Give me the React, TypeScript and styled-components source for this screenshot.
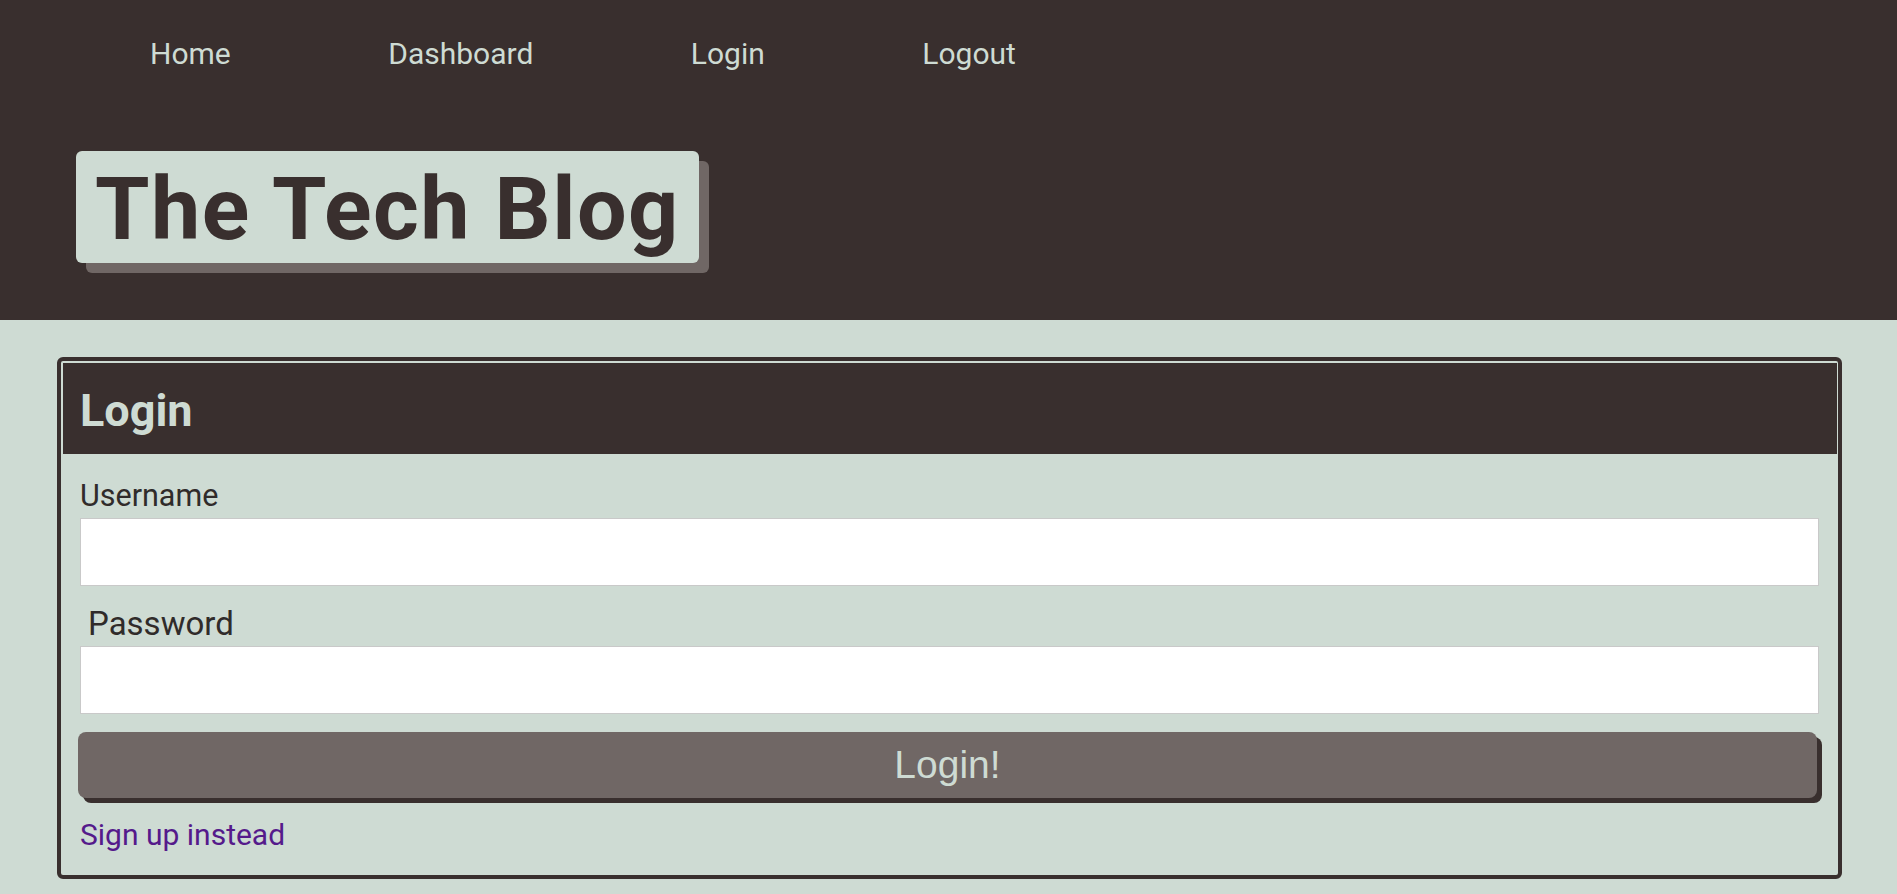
import React from 'react'
import styled, { createGlobalStyle } from 'styled-components'

const dark = '#392f2e'
const light = '#cedbd3'
const grey = '#706765'

const GlobalStyle = createGlobalStyle`
  body {
    margin: 0;
    background: ${light};
    font-family: Roboto, 'Noto Sans', sans-serif;
  }
`

const Header = styled.header`
  background: ${dark};
  height: 320px;
  box-sizing: border-box;
  padding-top: 36px;
`

const Nav = styled.nav`
  display: flex;
  gap: 157.5px;
  padding-left: 150px;
`

const NavLink = styled.a`
  font-size: 30px;
  line-height: 35px;
  color: ${light};
  text-decoration: none;
`

const TitleBox = styled.h1`
  display: inline-block;
  margin: 80px 0 0 76px;
  padding: 4px 19px 0;
  height: 112px;
  box-sizing: border-box;
  background: ${light};
  color: ${dark};
  border-radius: 6px;
  box-shadow: 10px 10px 0 ${grey};
  font-size: 88px;
  font-weight: 700;
  line-height: 108px;
  letter-spacing: 1.5px;
`

const Main = styled.main`
  padding: 37px 55px 0 57px;
`

const Card = styled.section`
  border: 4px solid ${dark};
  border-radius: 6px;
  padding: 2px 1px 0 2px;
  background: ${light};
`

const CardHeader = styled.h2`
  margin: 0;
  height: 91px;
  box-sizing: border-box;
  padding: 22px 0 0 17px;
  background: ${dark};
  color: ${light};
  font-size: 45px;
  font-weight: 700;
  line-height: 52px;
`

const Form = styled.form`
  display: flex;
  flex-direction: column;
  padding: 24px 18px 22px 17px;
`

const Label = styled.label<{ $size: number; $indent?: number }>`
  display: block;
  font-size: ${(p) => p.$size}px;
  line-height: 1.2;
  color: #302b2a;
  padding-left: ${(p) => p.$indent || 0}px;
  margin-bottom: 3px;
`

const Input = styled.input`
  display: block;
  width: 100%;
  height: 68px;
  box-sizing: border-box;
  border: 1px solid #c9c9c9;
  background: #fff;
  margin-bottom: 18px;
  font-size: 24px;
`

const Button = styled.button`
  display: block;
  height: 66px;
  margin: 0 2px 0 -2px;
  border: none;
  border-radius: 8px;
  background: ${grey};
  box-shadow: 5px 5px 0 ${dark};
  color: ${light};
  font-family: 'Liberation Sans', Arial, sans-serif;
  font-size: 39px;
  cursor: pointer;
`

const SignUp = styled.a`
  margin-top: 19px;
  font-size: 30px;
  line-height: 1.2;
  color: #551a8b;
  text-decoration: none;
`

export default function App() {
  return (
    <>
      <GlobalStyle />
      <Header>
        <Nav>
          <NavLink href="#">Home</NavLink>
          <NavLink href="#">Dashboard</NavLink>
          <NavLink href="#">Login</NavLink>
          <NavLink href="#">Logout</NavLink>
        </Nav>
        <TitleBox>The Tech Blog</TitleBox>
      </Header>
      <Main>
        <Card>
          <CardHeader>Login</CardHeader>
          <Form onSubmit={(e) => e.preventDefault()}>
            <Label $size={30.5} htmlFor="username">Username</Label>
            <Input id="username" type="text" />
            <Label $size={33} $indent={8} htmlFor="password">Password</Label>
            <Input id="password" type="password" />
            <Button type="submit">Login!</Button>
            <SignUp href="#">Sign up instead</SignUp>
          </Form>
        </Card>
      </Main>
    </>
  )
}
